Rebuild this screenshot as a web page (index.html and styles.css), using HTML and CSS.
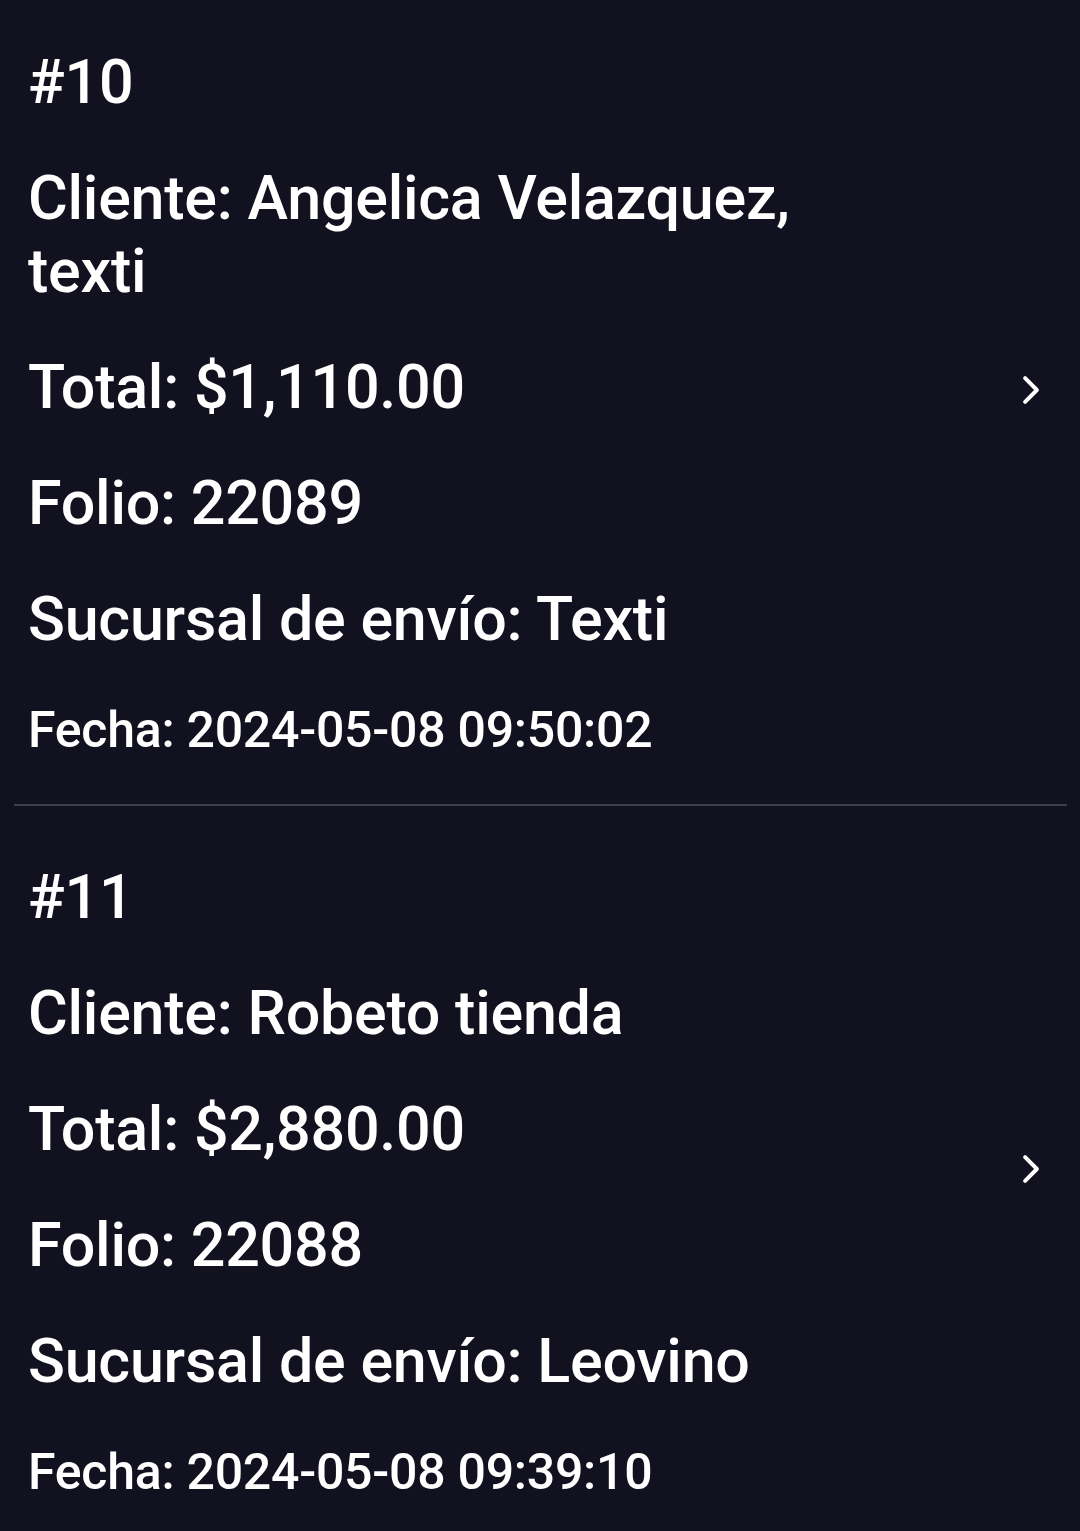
FILE: index.html
```html
<!DOCTYPE html>
<html lang="es">

<head>
    <meta charset="UTF-8">
    <meta name="viewport" content="width=device-width, initial-scale=1.0">
    <title>Pedidos</title>
    <link rel="stylesheet" href="styles.css">
</head>

<body>
    <div class="order-list">
        <div class="order-item">
            <div class="order-info">
                <p class="order-line">#10</p>
                <p class="order-line">Cliente: Angelica Velazquez, texti</p>
                <p class="order-line">Total: $1,110.00</p>
                <p class="order-line">Folio: 22089</p>
                <p class="order-line">Sucursal de envío: Texti</p>
                <p class="order-date">Fecha: 2024-05-08 09:50:02</p>
            </div>
            <svg class="chevron" viewBox="0 0 512 512">
                <polyline points="184 112 328 256 184 400" />
            </svg>
        </div>

        <div class="divider"></div>

        <div class="order-item">
            <div class="order-info">
                <p class="order-line">#11</p>
                <p class="order-line">Cliente: Robeto tienda</p>
                <p class="order-line">Total: $2,880.00</p>
                <p class="order-line">Folio: 22088</p>
                <p class="order-line">Sucursal de envío: Leovino</p>
                <p class="order-date">Fecha: 2024-05-08 09:39:10</p>
            </div>
            <svg class="chevron" viewBox="0 0 512 512">
                <polyline points="184 112 328 256 184 400" />
            </svg>
        </div>
    </div>
</body>

</html>
```

FILE: styles.css
```css
body {
    font-family: Roboto, "Noto Sans", sans-serif;
    margin: 0;
    background-color: #12111f;
    color: #fff;
    overflow: hidden;
}

/* list is scrolled a few pixels */
.order-list {
    margin-top: -9px;
}

.order-item {
    display: flex;
    align-items: center;
    padding: 55px 28px 44px 28px;
}

.order-info {
    display: flex;
    flex-direction: column;
    gap: 43px;
    flex: 1;
    max-width: 860px;
}

.order-line {
    margin: 0;
    font-size: 61px;
    font-weight: 500;
    line-height: 73px;
    letter-spacing: -0.25px;
}

.order-date {
    margin: 2px 0 0 0;
    font-size: 50px;
    font-weight: 500;
    line-height: 59px;
    letter-spacing: -0.25px;
}

.chevron {
    width: 42px;
    height: 42px;
    margin-left: auto;
    margin-top: -26px;
    fill: none;
    stroke: #fff;
    stroke-width: 48;
    stroke-linecap: round;
    stroke-linejoin: round;
}

.divider {
    height: 2px;
    margin: 0 13px 0 14px;
    background-color: #3f3e4c;
}
```
